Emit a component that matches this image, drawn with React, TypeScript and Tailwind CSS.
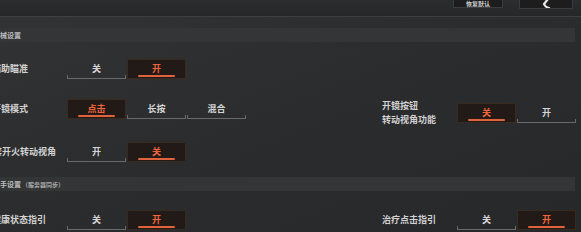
import React from "react";

type Opt = { label: string; active?: boolean };

const Seg = ({ opt }: { opt: Opt }) =>
  opt.active ? (
    <div className="relative w-[59px] h-[20px] flex items-center justify-center bg-[#221a17] border border-[#382921] text-[#f2633a] text-[9px] font-bold">
      {opt.label}
      <div className="absolute bottom-[1px] left-[10px] right-[10px] h-[2px] rounded-full bg-[#e0633d]" />
    </div>
  ) : (
    <div className="relative w-[59px] h-[20px] flex items-center justify-center text-[#d6d6d6] text-[9px] font-bold">
      {opt.label}
      <div className="absolute bottom-0 left-0 right-0 h-[4px] border-x border-b border-[#6a6a6a]" />
    </div>
  );

const Setting = ({
  label,
  opts,
  lines,
  labelWidth = "w-[75px]",
}: {
  label?: string;
  lines?: string[];
  opts: Opt[];
  labelWidth?: string;
}) => (
  <div className="flex items-center">
    <div
      className={`${labelWidth} text-[9px] font-bold text-[#d2d2d2] leading-[14px] whitespace-nowrap`}
    >
      {lines ? lines.map((l) => <div key={l}>{l}</div>) : label}
    </div>
    <div className="flex gap-[1px]">
      {opts.map((o) => (
        <Seg key={o.label} opt={o} />
      ))}
    </div>
  </div>
);

const Header = ({ children }: { children: React.ReactNode }) => (
  <div className="w-[575px] h-[14px] flex items-center overflow-hidden bg-[#343537] text-[7px] font-bold text-[#bdbdbd] whitespace-nowrap">
    <div className="ml-[-7px] flex items-center">{children}</div>
  </div>
);

export default function App() {
  return (
    <div
      className="w-[581px] h-[232px] overflow-hidden bg-gradient-to-br from-[#323335] via-[#2b2c2e] to-[#27282a]"
      style={{ fontFamily: '"Noto Sans CJK SC", "Noto Sans", sans-serif' }}
    >
      {/* top bar */}
      <div className="h-[17px] flex justify-end items-start pr-[8px] gap-[16px] bg-gradient-to-b from-[#2c2d2f] to-[#262729] border-b border-[#3e3f41]">
        <div className="w-[50px] h-[9px] mt-[-1px] flex items-end justify-center bg-[#1d1d1e] border border-[#3b3b3d] text-[6px] leading-[7px] text-[#cfcfcf] font-bold">
          恢复默认
        </div>
        <div className="w-[54px] h-[10px] mt-[-1px] flex items-end justify-center bg-[#1d1d1e] border border-[#3b3b3d]">
          <svg width="10" height="9" viewBox="0 0 10 9">
            <path d="M7 0 L3 5 Q4 8 8 9" stroke="#e8e8e8" strokeWidth="2.2" fill="none" strokeLinecap="round" />
          </svg>
        </div>
      </div>

      <div className="pt-[11px]">
        <Header>枪械设置</Header>

        <div className="ml-[-8px] mt-[17px]">
          <Setting
            label="辅助瞄准"
            opts={[{ label: "关" }, { label: "开", active: true }]}
          />
        </div>

        <div className="ml-[-8px] mt-[20px] flex">
          <div className="w-[390px]">
            <Setting
              label="开镜模式"
              opts={[
                { label: "点击", active: true },
                { label: "长按" },
                { label: "混合" },
              ]}
            />
          </div>
          <Setting
            lines={["开镜按钮", "转动视角功能"]}
            opts={[{ label: "关", active: true }, { label: "开" }]}
          />
        </div>

        <div className="ml-[-7px] mt-[15px]">
          <Setting
            label="禁开火转动视角"
            labelWidth="w-[74px]"
            opts={[{ label: "开" }, { label: "关", active: true }]}
          />
        </div>

        <div className="mt-[15px]">
          <Header>
            <span>助手设置</span>
            <span className="text-[6px] text-[#a8a8a8] ml-[1px]">（服务器同步）</span>
          </Header>
        </div>

        <div className="ml-[-8px] mt-[19px] flex">
          <div className="w-[390px]">
            <Setting
              label="健康状态指引"
              opts={[{ label: "关" }, { label: "开", active: true }]}
            />
          </div>
          <Setting
            label="治疗点击指引"
            opts={[{ label: "关" }, { label: "开", active: true }]}
          />
        </div>
      </div>
    </div>
  );
}
